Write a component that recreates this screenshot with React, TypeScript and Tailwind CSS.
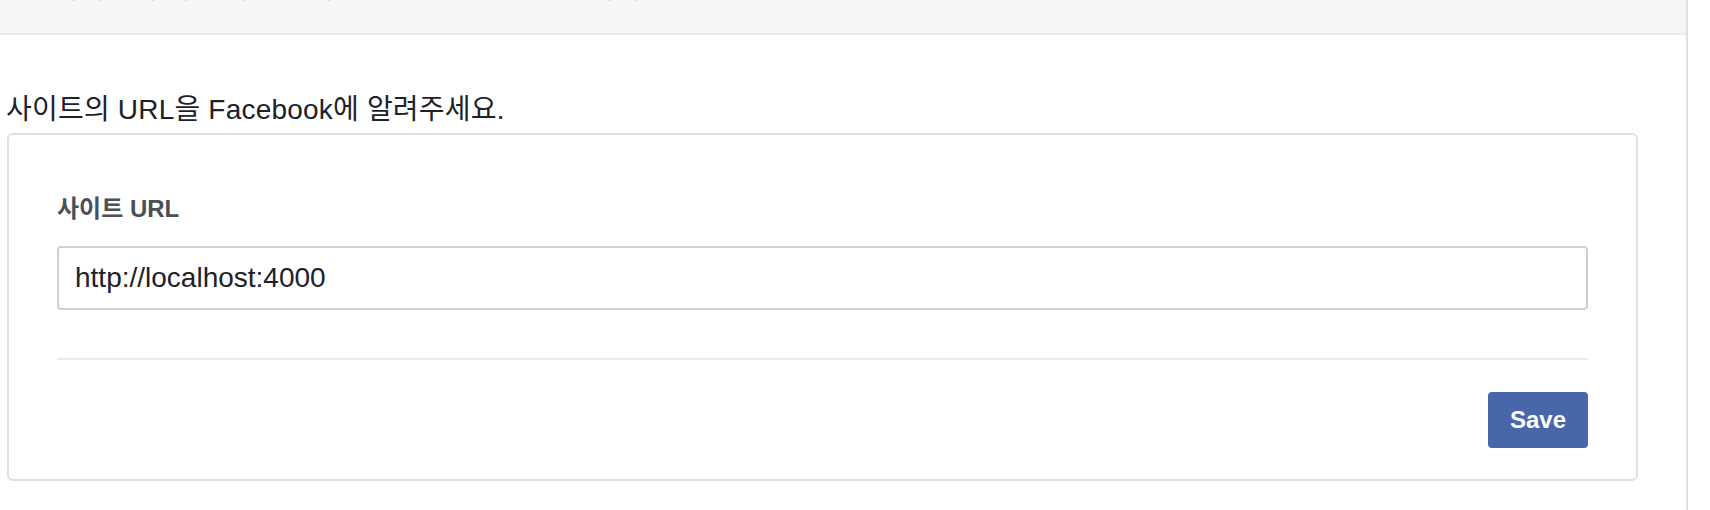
export default function App() {
  return (
    <div className="w-[1710px] h-[510px] bg-white flex overflow-hidden font-['Liberation_Sans','Noto_Sans_CJK_KR',sans-serif]">
      {/* main column */}
      <div className="w-[1688px] h-full shrink-0 border-r-2 border-[#dddfe2] flex flex-col">
        {/* page header, scrolled mostly out of view */}
        <div className="h-[35px] shrink-0 bg-[#f5f6f7] border-b-2 border-[#e9ebee] overflow-hidden pl-[28px]">
          <p className="-mt-[25px] text-[28px] leading-[28px] text-[#90949c] whitespace-nowrap">
            웹사이트에 대한 빠른 시작 Facebook SDK 설정하기
          </p>
        </div>

        <div className="pl-[6px] pr-[48px]">
          <p className="mt-[57px] text-[28px] leading-[36px] tracking-[0.2px] text-[#1d2129]">
            사이트의 URL을 Facebook에 알려주세요.
          </p>

          <div className="ml-px mt-[5px] border-2 border-[#dddfe2] rounded-[6px] bg-white pt-[58px] pb-[31px] px-[48px]">
            <label className="block text-[24px] leading-[32px] font-bold text-[#4b4f56]">
              사이트 URL
            </label>
            <input
              readOnly
              defaultValue="http://localhost:4000"
              className="mt-[21px] block w-full h-[64px] border-2 border-[#ccd0d5] rounded-[4px] px-[16px] text-[28px] text-[#1d2129] outline-none bg-white"
            />
            <div className="mt-[48px] h-[2px] bg-[#e9ebee]" />
            <div className="mt-[32px] flex justify-end">
              <button className="w-[100px] h-[56px] rounded-[4px] bg-[#4867aa] text-white text-[24px] font-bold">
                Save
              </button>
            </div>
          </div>
        </div>
      </div>
    </div>
  );
}
